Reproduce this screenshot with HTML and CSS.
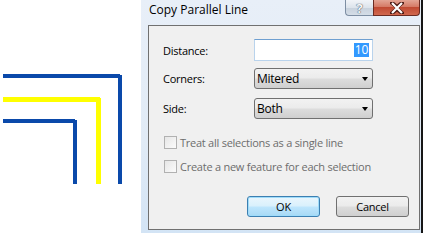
FILE: index.html
```html
<!DOCTYPE html>
<html lang="en">
<head>
    <meta charset="UTF-8">
    <title>Copy Parallel Line</title>
    <link rel="stylesheet" href="styles.css">
</head>
<body>
    <div class="desk">
        <svg class="sketch" width="141" height="245" viewBox="0 0 141 245">
            <rect x="3" y="74" width="117" height="4" fill="#0a49aa"/>
            <rect x="118" y="75" width="4" height="109" fill="#0a49aa"/>
            <rect x="3" y="97" width="97" height="5" fill="#ffff00"/>
            <rect x="96" y="98" width="5" height="86" fill="#ffff00"/>
            <rect x="3" y="119" width="72" height="4" fill="#0a49aa"/>
            <rect x="73" y="120" width="4" height="64" fill="#0a49aa"/>
        </svg>

        <div class="window">
            <div class="titlebar">
                <span class="title">Copy Parallel Line</span>
                <div class="caption-btns">
                    <span class="cap-btn help">?</span>
                    <span class="cap-btn close">
                        <svg width="14" height="12" viewBox="0 0 14 12">
                            <path d="M2 1 L7 5 L12 1 M2 11 L7 7 L12 11 M7 6 L7 6" stroke="#4a1a14" stroke-width="4" fill="none" stroke-linecap="round"/>
                            <path d="M2 1 L12 11 M12 1 L2 11" stroke="#ffffff" stroke-width="2.2" fill="none"/>
                        </svg>
                    </span>
                </div>
            </div>

            <div class="client">
                <div class="field-row row-distance">
                    <label class="field-label">Distance:</label>
                    <div class="textbox"><span class="selected">10</span></div>
                </div>
                <div class="field-row row-corners">
                    <label class="field-label">Corners:</label>
                    <div class="combo"><span>Mitered</span><i class="arrow"></i></div>
                </div>
                <div class="field-row row-side">
                    <label class="field-label">Side:</label>
                    <div class="combo"><span>Both</span><i class="arrow"></i></div>
                </div>

                <div class="check-row first">
                    <span class="checkbox"></span>
                    <span class="check-text">Treat all selections as a single line</span>
                </div>
                <div class="check-row">
                    <span class="checkbox"></span>
                    <span class="check-text">Create a new feature for each selection</span>
                </div>

                <div class="button-row">
                    <button class="btn btn-default">OK</button>
                    <button class="btn">Cancel</button>
                </div>
            </div>
        </div>
    </div>
</body>
</html>
```

FILE: styles.css
```css
:root {
    --line-blue: #0a49aa;
    --dialog-bg: #f0f0f0;
    --text-dark: #000000;
    --text-disabled: #6d6d6d;
}

* {
    margin: 0;
    padding: 0;
    box-sizing: border-box;
}

body {
    background: #ffffff;
    font-family: 'Open Sans', 'Noto Sans', sans-serif;
    font-size: 11px;
    letter-spacing: -0.25px;
    color: var(--text-dark);
}

.desk {
    width: 436px;
    height: 245px;
    display: flex;
    align-items: flex-start;
}

.sketch {
    display: block;
    flex: none;
}

/* window frame */
.window {
    width: 282px;
    height: 233px;
    padding: 0 1px 3px 7px;
    border-right: 2px solid #161616;
    background: linear-gradient(to bottom, #e8eff8 0%, #e1ebf6 60%, #d3e4f5 100%);
    display: flex;
    flex-direction: column;
}

.titlebar {
    height: 25px;
    display: flex;
    justify-content: space-between;
    align-items: flex-start;
}

.title {
    font-size: 12px;
    letter-spacing: 0;
    line-height: 16px;
    padding: 2px 0 0 1px;
    color: #000;
}

.caption-btns {
    display: flex;
}

.cap-btn {
    height: 16px;
    display: flex;
    align-items: center;
    justify-content: center;
}

.help {
    width: 28px;
    border: 1px solid #7d8ea3;
    border-top: none;
    border-right: none;
    border-radius: 0 0 0 4px;
    background: linear-gradient(to bottom, #f1f4f8 0%, #dde4ec 50%, #c7d1dc 51%, #d4dde7 100%);
    color: #f7f7f7;
    font-size: 13px;
    font-weight: 700;
    text-shadow: 0 0 1px #3c4a5a, 0 0 1px #3c4a5a;
}

.close {
    width: 47px;
    border: 1px solid #6b2b22;
    border-top: none;
    border-radius: 0 0 4px 0;
    background: linear-gradient(to bottom, #e3a595 0%, #d57a66 45%, #c04a33 50%, #d0684f 100%);
}

/* client area */
.client {
    height: 205px;
    border: 1px solid #707070;
    background: var(--dialog-bg);
    padding: 13px 10px 0 14px;
}

.field-row {
    display: flex;
    align-items: center;
}

.field-label {
    width: 91px;
    flex: none;
}

.row-distance {
    height: 22px;
    margin-bottom: 7px;
}

.row-corners {
    height: 21px;
    margin-bottom: 9px;
}

.row-side {
    height: 21px;
}

.textbox {
    width: 119px;
    height: 22px;
    background: #ffffff;
    border: 1px solid #b9d3ec;
    border-top-color: #6f9fd0;
    display: flex;
    align-items: center;
    justify-content: flex-end;
    padding-right: 3px;
}

.selected {
    background: #3399ff;
    color: #ffffff;
    padding: 0 1px;
    line-height: 14px;
    font-size: 12px;
}

.combo {
    width: 119px;
    height: 21px;
    border: 1px solid #707070;
    border-radius: 3px;
    background: linear-gradient(to bottom, #f2f2f2 0%, #ebebeb 48%, #dddddd 52%, #cfcfcf 100%);
    display: flex;
    align-items: center;
    justify-content: space-between;
    padding: 0 4px 0 2px;
    font-size: 12px;
}

.arrow {
    width: 0;
    height: 0;
    border-left: 3.5px solid transparent;
    border-right: 3.5px solid transparent;
    border-top: 4px solid #000000;
}

.check-row {
    display: flex;
    align-items: center;
    height: 13px;
    margin-top: 11px;
    padding-left: 1px;
    color: var(--text-disabled);
}

.check-row.first {
    margin-top: 17px;
}

.checkbox {
    width: 13px;
    height: 13px;
    border: 1px solid #b1b1b1;
    background: linear-gradient(135deg, #e6e6e6, #fbfbfb);
    margin-right: 3px;
    flex: none;
}

.button-row {
    display: flex;
    justify-content: flex-end;
    gap: 16px;
    margin-top: 23px;
}

.btn {
    width: 73px;
    height: 21px;
    border: 1px solid #707070;
    border-radius: 3px;
    background: linear-gradient(to bottom, #f2f2f2 0%, #ebebeb 48%, #dddddd 52%, #cfcfcf 100%);
    font-family: inherit;
    font-size: 11px;
    letter-spacing: -0.25px;
    color: #000;
}

.btn-default {
    border-color: #3c7fb1;
    background: linear-gradient(to bottom, #eaf6fd 0%, #d9f0fc 48%, #bee6fd 52%, #a7d9f5 100%);
    box-shadow: inset 0 0 0 1px #9fdcfa;
}
```
